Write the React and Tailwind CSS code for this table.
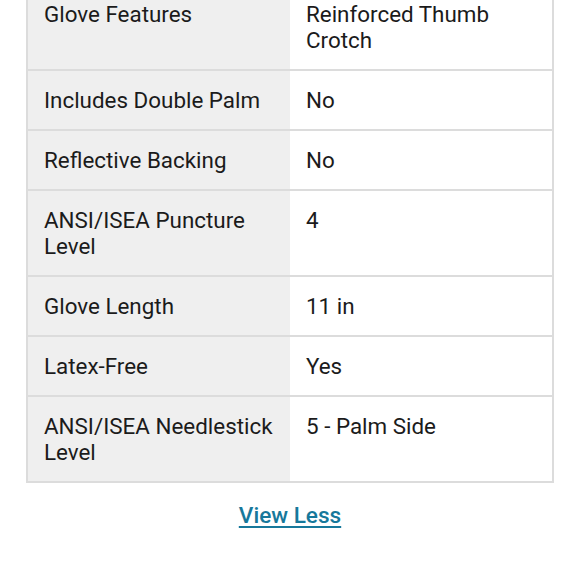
import React from "react";

const specs = [
  { label: "Glove Features", value: "Reinforced Thumb Crotch" },
  { label: "Includes Double Palm", value: "No" },
  { label: "Reflective Backing", value: "No" },
  { label: "ANSI/ISEA Puncture Level", value: "4" },
  { label: "Glove Length", value: "11 in" },
  { label: "Latex-Free", value: "Yes" },
  { label: "ANSI/ISEA Needlestick Level", value: "5 - Palm Side" },
];

const App = () => {
  return (
    <div
      className="w-[580px] h-[580px] overflow-hidden bg-white text-[#1b1b1b]"
      style={{ fontFamily: "Roboto, 'Liberation Sans', sans-serif" }}
    >
      <div className="mx-[26px] mt-[-17px] border-2 border-[#dcdcdc]">
        {specs.map((row, index) => (
          <div
            key={index}
            className={`grid grid-cols-2 ${index > 0 ? "border-t-2 border-[#dcdcdc]" : ""}`}
          >
            <div className="bg-[#efefef] px-4 py-4 text-[22.4px] leading-[26px]">
              {row.label}
            </div>
            <div className="px-4 py-4 text-[22.4px] leading-[26px]">{row.value}</div>
          </div>
        ))}
      </div>
      <div className="flex justify-center pt-[20px]">
        <a
          href="#"
          className="text-[22.6px] leading-[26px] font-medium text-[#17789b] underline decoration-2 underline-offset-[3px]"
        >
          View Less
        </a>
      </div>
    </div>
  );
};

export default App;
